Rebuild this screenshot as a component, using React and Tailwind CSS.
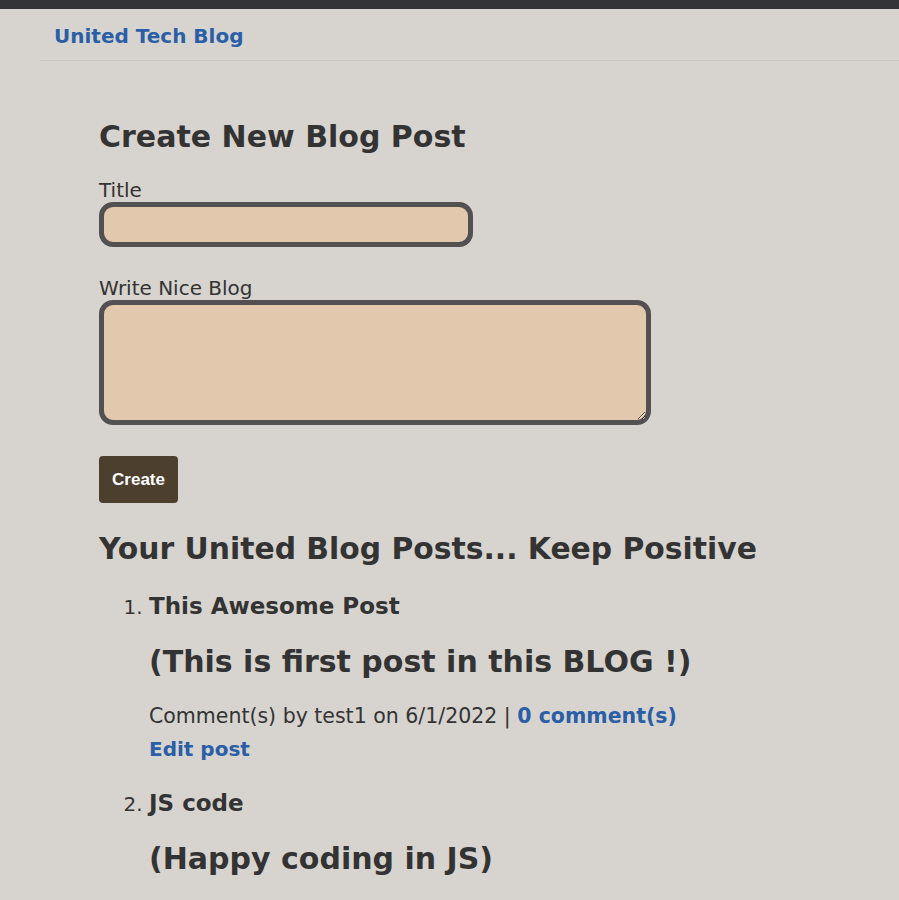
export default function App() {
  return (
    <div className="min-h-[900px] bg-[#d7d4cf] text-[#333] border-t-[9px] border-[#333438]" style={{ fontFamily: '"DejaVu Sans", Verdana, sans-serif' }}>
      <div className="ml-[40px] border-b border-[#cbc8c3] h-[52px] flex items-center pl-[14px] pt-[2px]">
        <a className="text-[#2a5ea6] font-bold text-[20px]">United Tech Blog</a>
      </div>
      <div className="pl-[99px] pt-[58px]">
        <h2 className="text-[30px] font-bold leading-[36px]">Create New Blog Post</h2>
        <div className="mt-[23px] text-[20px] leading-[24px]">Title</div>
        <input className="block w-[374px] h-[45px] bg-[#e2c8ad] border-[5px] border-[#525050] rounded-[14px] outline-none" />
        <div className="mt-[29px] text-[20px] leading-[24px]">Write Nice Blog</div>
        <textarea className="block w-[552px] h-[125px] bg-[#e2c8ad] border-[5px] border-[#525050] rounded-[14px] outline-none resize" />
        <button className="mt-[31px] w-[79px] h-[47px] bg-[#4d3f2e] rounded-[4px] text-white font-bold text-[17px]" style={{ fontFamily: '"Liberation Sans", Arial, sans-serif' }}>Create</button>
        <h2 className="mt-[28px] text-[29.8px] font-bold leading-[36px]">Your United Blog Posts... Keep Positive</h2>
        <ol className="list-decimal pl-[50px] mt-[25px]">
          <li className="text-[20px]">
            <div className="text-[23px] font-bold leading-[28px]">This Awesome Post</div>
            <h2 className="mt-[22px] text-[30px] font-bold leading-[40px]">(This is first post in this BLOG !)</h2>
            <div className="mt-[21px] text-[20.5px] leading-[26px]">Comment(s) by test1 on 6/1/2022 | <a className="text-[#2a5ea6] font-bold">0 comment(s)</a></div>
            <div className="mt-[7px] text-[20px] leading-[26px] text-[#2a5ea6] font-bold">Edit post</div>
          </li>
          <li className="text-[20px] mt-[27px]">
            <div className="text-[23px] font-bold leading-[28px]">JS code</div>
            <h2 className="mt-[22px] text-[30px] font-bold leading-[40px]">(Happy coding in JS)</h2>
          </li>
        </ol>
      </div>
    </div>
  );
}
